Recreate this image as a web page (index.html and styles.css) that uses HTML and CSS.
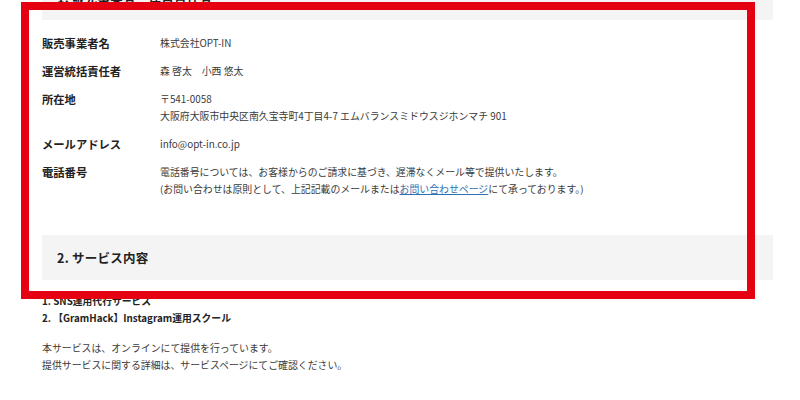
FILE: index.html
```html
<!DOCTYPE html>
<html lang="ja">
<head>
<meta charset="utf-8">
<link rel="stylesheet" href="styles.css">
</head>
<body>
<div class="page">
  <h2 class="sec-head sec-head--first">1. 販売事業者　運営責任者</h2>
  <dl class="info">
    <div class="row"><dt>販売事業者名</dt><dd>株式会社OPT-IN</dd></div>
    <div class="row"><dt>運営統括責任者</dt><dd>森 啓太　小西 悠太</dd></div>
    <div class="row"><dt>所在地</dt><dd>〒541-0058<br>大阪府大阪市中央区南久宝寺町4丁目4-7 エムバランスミドウスジホンマチ 901</dd></div>
    <div class="row"><dt>メールアドレス</dt><dd>info@opt-in.co.jp</dd></div>
    <div class="row"><dt>電話番号</dt><dd>電話番号については、お客様からのご請求に基づき、遅滞なくメール等で提供いたします。<br>(お問い合わせは原則として、上記記載のメールまたは<a href="#" class="link">お問い合わせページ</a>にて承っております。)</dd></div>
  </dl>
  <h2 class="sec-head">2. サービス内容</h2>
  <ol class="services">
    <li>1. SNS運用代行サービス</li>
    <li>2. 【GramHack】Instagram運用スクール</li>
  </ol>
  <p class="note">本サービスは、オンラインにて提供を行っています。<br>提供サービスに関する詳細は、サービスページにてご確認ください。</p>
</div>
<div class="highlight"></div>
</body>
</html>
```
FILE: styles.css
```css
html, body {
  margin: 0;
  padding: 0;
  background: #fff;
  overflow: hidden;
}
body {
  font-family: "Noto Sans CJK JP", "Noto Sans", sans-serif;
  color: #333;
  position: relative;
  width: 800px;
  height: 400px;
}
.page {
  width: 731px;
  padding-left: 42px;
}
.sec-head {
  margin: 0;
  height: 45px;
  box-sizing: border-box;
  background: #f4f4f5;
  padding-left: 15px;
  display: flex;
  align-items: center;
  font-size: 12.5px;
  font-weight: 700;
  color: #222;
  letter-spacing: 0.02em;
}
.sec-head--first {
  margin-top: -25px;
}
.info {
  margin: 15px 0 37px;
  display: flex;
  flex-direction: column;
  gap: 11px;
}
.row {
  display: flex;
}
.row dt {
  width: 118px;
  flex: none;
  font-size: 11.3px;
  font-weight: 700;
  line-height: 17px;
  color: #222;
}
.row dd {
  margin: 0;
  font-size: 9.9px;
  line-height: 17px;
  color: #3a3a3a;
}
.link {
  color: #2f6fb3;
  text-decoration: underline;
}
.services {
  list-style: none;
  margin: 13px 0 0;
  padding: 0;
  font-size: 9.8px;
  font-weight: 700;
  line-height: 17px;
  color: #222;
}
.note {
  margin: 13px 0 0;
  font-size: 9.9px;
  line-height: 17px;
  color: #3a3a3a;
}
.highlight {
  position: absolute;
  left: 21px;
  top: 2px;
  width: 734px;
  height: 297px;
  box-sizing: border-box;
  border: 8px solid #e50012;
  pointer-events: none;
}
```
